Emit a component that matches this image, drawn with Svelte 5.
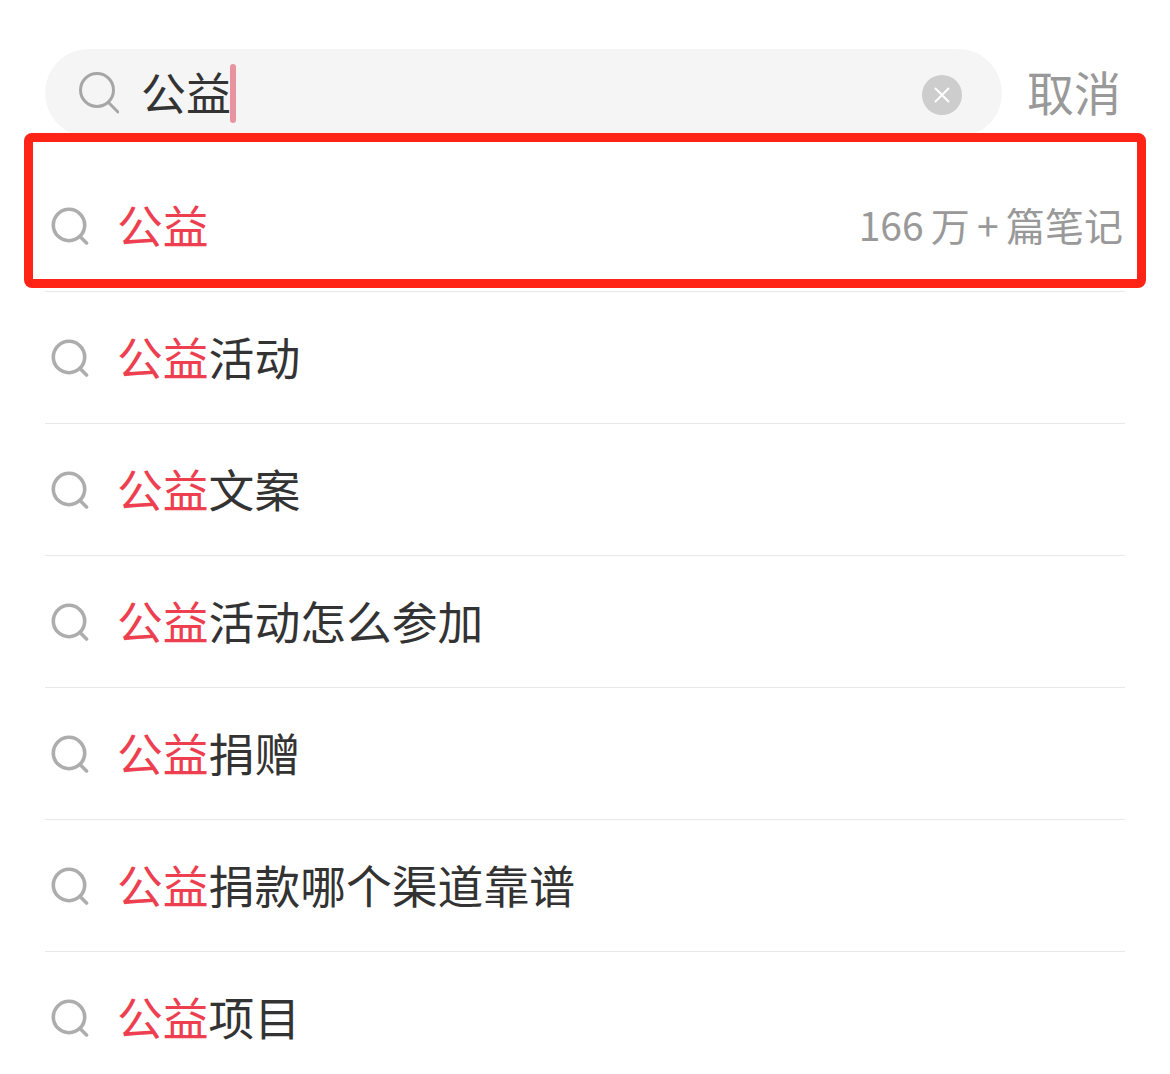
<script>
	const suggestions = ['', '活动', '文案', '活动怎么参加', '捐赠', '捐款哪个渠道靠谱', '项目'];
</script>

<div class="page">
	<header class="search-bar">
		<div class="search-box">
			<svg class="search-icon" viewBox="0 0 40 42" width="40" height="42" fill="none" stroke="#a6a6a6" stroke-width="3">
				<circle cx="18" cy="18" r="16.5" />
				<path d="M29.5 30.5 L39 40" stroke-linecap="round" />
			</svg>
			<span class="query">公益</span>
			<span class="caret"></span>
			<span class="clear">
				<svg viewBox="0 0 16 16" width="16" height="16" stroke="#fff" stroke-width="2" stroke-linecap="round">
					<path d="M1.5 1.5 L14.5 14.5 M14.5 1.5 L1.5 14.5" />
				</svg>
			</span>
		</div>
		<span class="cancel">取消</span>
	</header>

	<ul class="list">
		{#each suggestions as rest, i}
			<li class="row">
				<svg class="row-icon" viewBox="0 0 38 38" width="38" height="38" fill="none" stroke="#adadad" stroke-width="3.6">
					<circle cx="18" cy="18" r="15.7" />
					<path d="M29 29.5 L35.5 36" stroke-linecap="round" />
				</svg>
				<span class="label"><em>公益</em>{rest}</span>
				{#if i === 0}
					<span class="meta">166 万 + 篇笔记</span>
				{/if}
			</li>
		{/each}
	</ul>

	<div class="highlight"></div>
</div>

<style>
	:global(body) {
		background: #fff;
	}

	.page {
		position: relative;
		width: 1170px;
		height: 1074px;
		overflow: hidden;
		font-family: 'Noto Sans CJK SC', 'Noto Sans', sans-serif;
	}

	.search-bar {
		display: flex;
		align-items: center;
		padding: 49px 0 0 45px;
	}

	.search-box {
		flex: none;
		width: 957px;
		box-sizing: border-box;
		display: flex;
		align-items: center;
		height: 88px;
		padding: 0 40px 0 34px;
		border-radius: 44px;
		background: #f5f5f5;
	}

	.query {
		margin-left: 22px;
		padding-bottom: 2px;
		font-size: 45px;
		line-height: 86px;
		color: #333;
	}

	.caret {
		width: 6px;
		height: 59px;
		margin-left: -1px;
		border-radius: 3px;
		background: #e8949f;
	}

	.clear {
		display: flex;
		align-items: center;
		justify-content: center;
		width: 40px;
		height: 40px;
		margin-left: auto;
		margin-top: 3px;
		border-radius: 50%;
		background: #cdcdcd;
	}

	.cancel {
		margin-left: 25px;
		padding-bottom: 4px;
		font-size: 47px;
		line-height: 84px;
		color: #999;
	}

	.list {
		list-style: none;
		margin: 0 45px;
		padding: 23px 0 0;
	}

	.row {
		display: flex;
		align-items: center;
		height: 131px;
		border-bottom: 1px solid #e8e8e8;
	}

	.row:last-child {
		border-bottom: 0;
	}

	.row-icon {
		flex: none;
		margin-left: 6px;
	}

	.label {
		margin-left: 28px;
		padding-bottom: 4px;
		font-size: 45.8px;
		color: #333;
	}

	.label em {
		font-style: normal;
		color: #ed3f50;
	}

	.meta {
		margin-left: auto;
		margin-right: 2px;
		padding-bottom: 4px;
		font-size: 39px;
		color: #999;
		word-spacing: -1.5px;
	}

	.highlight {
		position: absolute;
		left: 24px;
		top: 133px;
		width: 1122px;
		height: 155px;
		box-sizing: border-box;
		border: 9px solid #ff2415;
		border-radius: 8px;
	}
</style>
